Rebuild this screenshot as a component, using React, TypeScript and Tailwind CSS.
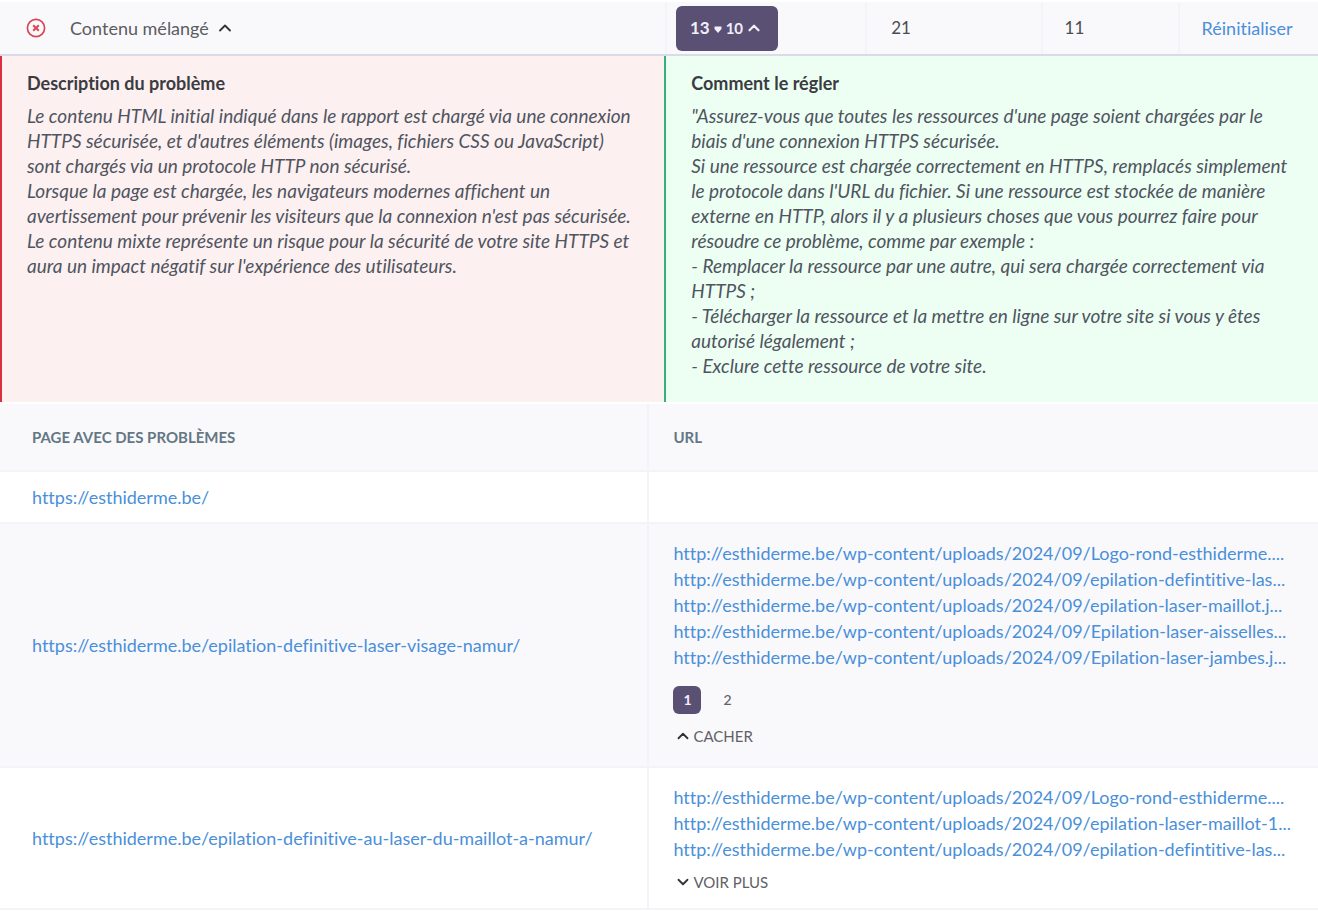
import React from "react";
import { ChevronDown, ChevronUp } from "lucide-react";

const UPLOADS = "http://esthiderme.be/wp-content/uploads/2024/09/";

type Row = {
  page: string;
  files: string[];
  pages?: number[];
  toggle?: "CACHER" | "VOIR PLUS";
};

const rows: Row[] = [
  { page: "https://esthiderme.be/", files: [] },
  {
    page: "https://esthiderme.be/epilation-definitive-laser-visage-namur/",
    files: [
      "Logo-rond-esthiderme....",
      "epilation-defintitive-las...",
      "epilation-laser-maillot.j...",
      "Epilation-laser-aisselles...",
      "Epilation-laser-jambes.j...",
    ],
    pages: [1, 2],
    toggle: "CACHER",
  },
  {
    page: "https://esthiderme.be/epilation-definitive-au-laser-du-maillot-a-namur/",
    files: ["Logo-rond-esthiderme....", "epilation-laser-maillot-1...", "epilation-defintitive-las..."],
    toggle: "VOIR PLUS",
  },
];

const problem = [
  "Le contenu HTML initial indiqué dans le rapport est chargé via une connexion HTTPS sécurisée, et d'autres éléments (images, fichiers CSS ou JavaScript) sont chargés via un protocole HTTP non sécurisé.",
  "Lorsque la page est chargée, les navigateurs modernes affichent un avertissement pour prévenir les visiteurs que la connexion n'est pas sécurisée. Le contenu mixte représente un risque pour la sécurité de votre site HTTPS et aura un impact négatif sur l'expérience des utilisateurs.",
];

const solution = [
  "\"Assurez-vous que toutes les ressources d'une page soient chargées par le biais d'une connexion HTTPS sécurisée.",
  "Si une ressource est chargée correctement en HTTPS, remplacés simplement le protocole dans l'URL du fichier. Si une ressource est stockée de manière externe en HTTP, alors il y a plusieurs choses que vous pourrez faire pour résoudre ce problème, comme par exemple :",
  "- Remplacer la ressource par une autre, qui sera chargée correctement via HTTPS ;",
  "- Télécharger la ressource et la mettre en ligne sur votre site si vous y êtes autorisé légalement ;",
  "- Exclure cette ressource de votre site.",
];

function ErrorIcon() {
  return (
    <svg viewBox="0 0 20 20" className="size-5 shrink-0" fill="none" stroke="#dc4652" aria-hidden="true">
      <circle cx="10" cy="10" r="8.6" strokeWidth="1.7" />
      <path d="M7.2 7.2l5.6 5.6M12.8 7.2l-5.6 5.6" strokeWidth="2" />
    </svg>
  );
}

function SummaryBar() {
  return (
    <div className="mt-0.5 flex h-[54px] items-stretch border-b-2 border-[#d9dce8] bg-[#f9f9fc]">
      <div className="flex w-[50.6%] items-center border-r-2 border-[#f3f4f7] pl-[26px]">
        <ErrorIcon />
        <button type="button" className="ml-6 flex items-center gap-1.5 text-lg text-[#5b5c61]">
          Contenu mélangé
          <ChevronUp className="size-5 text-[#333]" strokeWidth={2.2} />
        </button>
      </div>
      <div className="flex w-[15.2%] items-center border-r-2 border-[#f3f4f7] pl-[9px]">
        <button
          type="button"
          className="flex h-[45px] w-[102px] items-center rounded-md bg-[#595074] pl-3.5 text-[17px] font-bold text-[#f1effa]"
        >
          13
          <svg viewBox="0 0 16 8" className="mt-1 h-2 w-4" aria-hidden="true">
            <path d="M4.5 0.5h7V3L8 7L4.5 3z" fill="currentColor" />
          </svg>
          <span className="text-[15px]">10</span>
          <ChevronUp className="ml-0.5 size-[18px]" strokeWidth={3} />
        </button>
      </div>
      <div className="flex w-[13.3%] items-center border-r-2 border-[#f3f4f7] pl-6 text-[17px] text-[#4b4c50]">21</div>
      <div className="flex w-[10.4%] items-center border-r-2 border-[#f3f4f7] pl-[22px] text-[17px] text-[#4b4c50]">11</div>
      <div className="flex flex-1 items-center pl-[22px]">
        <a href="#reset" className="text-lg text-[#4a8fd9]">
          Réinitialiser
        </a>
      </div>
    </div>
  );
}

function Note({ title, lines, tone }: { title: string; lines: string[]; tone: string }) {
  return (
    <section className={`border-l-2 pt-3.5 pr-6 pb-6 pl-[25px] ${tone}`}>
      <h2 className="text-lg leading-[26px] font-bold text-[#3b3c42]">{title}</h2>
      <div className="mt-[7px] text-[19px] leading-[25px] text-[#4f5560] italic">
        {lines.map((line) => (
          <p key={line}>{line}</p>
        ))}
      </div>
    </section>
  );
}

function UrlCell({ row }: { row: Row }) {
  return (
    <>
      <ul className="text-lg leading-[26px]">
        {row.files.map((file) => (
          <li key={file}>
            <a href={UPLOADS} className="whitespace-nowrap text-[#4a8fd9]">
              {UPLOADS + file}
            </a>
          </li>
        ))}
      </ul>
      {row.pages && (
        <nav className="mt-4 flex gap-3 text-sm">
          {row.pages.map((n) => (
            <button
              key={n}
              type="button"
              className={
                n === 1
                  ? "size-7 rounded-md bg-[#595074] font-bold text-[#f1effa]"
                  : "size-7 font-medium text-[#606166]"
              }
            >
              {n}
            </button>
          ))}
        </nav>
      )}
      {row.toggle && (
        <button
          type="button"
          className={`flex items-center gap-px pl-px text-[15px] leading-5 text-[#606166] ${row.pages ? "mt-3" : "mt-2.5"}`}
        >
          {row.toggle === "CACHER" ? (
            <ChevronUp className="size-[18px] text-[#333]" strokeWidth={2.4} />
          ) : (
            <ChevronDown className="size-[18px] text-[#333]" strokeWidth={2.4} />
          )}
          {row.toggle}
        </button>
      )}
    </>
  );
}

function cellPadding(row: Row) {
  if (!row.files.length) return "pl-6";
  return row.pages ? "pt-4 pb-5 pl-6" : "pt-4 pb-4 pl-6";
}

export default function App() {
  return (
    <main className="min-h-screen overflow-x-hidden bg-white font-['Lato',sans-serif] [font-variant-ligatures:none]">
      <SummaryBar />
      <div className="grid grid-cols-[50.4%_1fr]">
        <Note title="Description du problème" lines={problem} tone="border-[#d92f3e] bg-[#fdf0f0]" />
        <Note title="Comment le régler" lines={solution} tone="border-[#36b07c] bg-[#edfff3]" />
      </div>
      <table className="mt-0.5 w-full table-fixed border-collapse text-left">
        <thead>
          <tr className="h-[67px] border-b-2 border-[#f3f4f7] bg-[#f9f9fc] text-[15px] text-[#647783]">
            <th className="w-[49.2%] border-r-2 border-[#f3f4f7] pl-8 font-bold">PAGE AVEC DES PROBLÈMES</th>
            <th className="pl-6 font-bold">URL</th>
          </tr>
        </thead>
        <tbody>
          {rows.map((row) => (
            <tr key={row.page} className="h-[52px] border-b-2 border-[#f3f4f7] even:bg-[#f9f9fc]">
              <td className="border-r-2 border-[#f3f4f7] pl-8 text-lg">
                <a href={row.page} className="text-[#4a8fd9]">
                  {row.page}
                </a>
              </td>
              <td className={cellPadding(row)}>{row.files.length > 0 && <UrlCell row={row} />}</td>
            </tr>
          ))}
        </tbody>
      </table>
    </main>
  );
}
